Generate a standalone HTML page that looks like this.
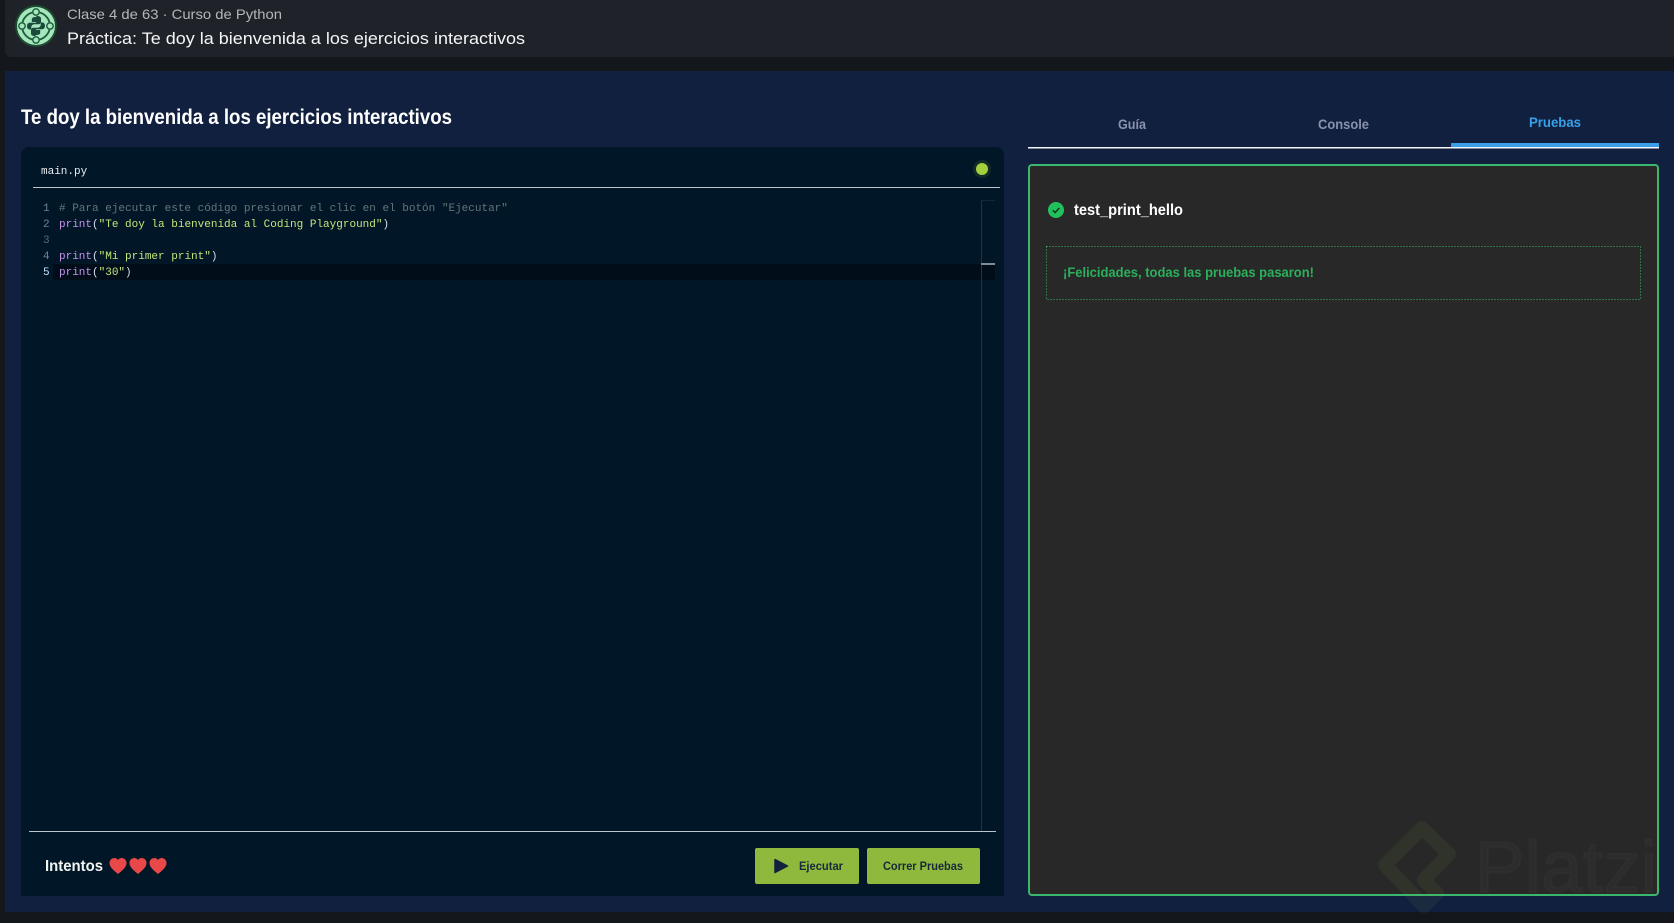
<!DOCTYPE html>
<html lang="es">
<head>
<meta charset="utf-8">
<title>Práctica: Te doy la bienvenida a los ejercicios interactivos</title>
<style>
html,body{margin:0;padding:0;width:1674px;height:923px;overflow:hidden;background:#14171c}
svg{display:block}
text{font-family:"Liberation Sans",sans-serif;white-space:pre}
.m{font-family:"Liberation Mono",monospace;font-size:11px}
</style>
</head>
<body>
<svg width="1674" height="923" viewBox="0 0 1674 923" xmlns="http://www.w3.org/2000/svg">
<rect width="1674" height="923" fill="#14171c"/>
<!-- top bar -->
<rect x="5" y="-10" width="1680" height="67" rx="6" fill="#1f2329"/>
<circle cx="36" cy="26" r="21" fill="#1d4a33"/>
<circle cx="36" cy="26" r="19" fill="#a5e6bb"/>
<circle cx="36" cy="26" r="14" fill="none" stroke="#1c5a3b" stroke-width="1.8"/>
<g fill="#a5e6bb" stroke="#1c5a3b" stroke-width="1.4">
<circle cx="36" cy="12" r="3.2"/><circle cx="36" cy="40" r="3.2"/><circle cx="22" cy="26" r="3.2"/><circle cx="50" cy="26" r="3.2"/>
</g>
<g fill="#1a4a3c">
<path id="py" d="M35.8 17c-4 0-4 1.700-4 2.500V22h4.300v.8h-6.200c-1.500 0-2.900 1-2.900 3.300s1.200 3.400 2.700 3.400h1.600v-2.300c0-1.600 1.400-3 3-3h4.300c1.300 0 2.400-1.100 2.400-2.500v-3.200c0-1.400-1.100-2.500-4.200-2.500z"/>
<path d="M35.8 17c-4 0-4 1.700-4 2.500V22h4.300v.8h-6.200c-1.500 0-2.900 1-2.900 3.300s1.200 3.400 2.700 3.400h1.600v-2.300c0-1.600 1.400-3 3-3h4.300c1.300 0 2.400-1.100 2.400-2.500v-3.200c0-1.400-1.100-2.500-4.200-2.500z" transform="rotate(180 36 26)"/>
</g>
<text x="67" y="19" font-size="14" fill="#b4b6ba" textLength="215" lengthAdjust="spacingAndGlyphs">Clase 4 de 63 · Curso de Python</text>
<text x="67" y="44" font-size="17" fill="#f4f5f6" textLength="458" lengthAdjust="spacingAndGlyphs">Práctica: Te doy la bienvenida a los ejercicios interactivos</text>
<!-- main panel -->
<rect x="5" y="71" width="1680" height="841" fill="#122040"/>
<text x="21" y="124" font-size="21" font-weight="700" fill="#fff" textLength="431" lengthAdjust="spacingAndGlyphs">Te doy la bienvenida a los ejercicios interactivos</text>
<!-- editor -->
<path d="M21 155a8 8 0 0 1 8-8h967a8 8 0 0 1 8 8v741H21z" fill="#011627"/>
<text class="m" x="41" y="174" fill="#e8edf2">main.py</text>
<circle cx="982" cy="169" r="9" fill="#1d3a2a" opacity=".6"/>
<circle cx="982" cy="169" r="6" fill="#a3cf3c"/>
<rect x="33" y="187" width="967" height="1" fill="#b9c4cc"/>
<rect x="53" y="264" width="942" height="16" fill="#010e1a"/>
<rect x="981" y="200" width="1" height="631" fill="#1f3445"/>
<rect x="981" y="200" width="14" height="1" fill="#14283a"/>
<rect x="981" y="263" width="14" height="2" fill="#7f8d9b"/>
<g class="m">
<text class="m" x="43" y="211" fill="#6f8496">1</text>
<text class="m" x="43" y="227" fill="#6f8496">2</text>
<text class="m" x="43" y="243" fill="#4f6a80">3</text>
<text class="m" x="43" y="259" fill="#6f8496">4</text>
<text class="m" x="43" y="275" fill="#c5e4fd">5</text>
<text class="m" x="59" y="211" fill="#637777"># Para ejecutar este código presionar el clic en el botón "Ejecutar"</text>
<text class="m" x="59" y="227"><tspan fill="#c792ea">print</tspan><tspan fill="#d6deeb">(</tspan><tspan fill="#c5e478">"Te doy la bienvenida al Coding Playground"</tspan><tspan fill="#d6deeb">)</tspan></text>
<text class="m" x="59" y="259"><tspan fill="#c792ea">print</tspan><tspan fill="#d6deeb">(</tspan><tspan fill="#c5e478">"Mi primer print"</tspan><tspan fill="#d6deeb">)</tspan></text>
<text class="m" x="59" y="275"><tspan fill="#c792ea">print</tspan><tspan fill="#d6deeb">(</tspan><tspan fill="#c5e478">"30"</tspan><tspan fill="#d6deeb">)</tspan></text>
</g>
<rect x="29" y="831" width="967" height="1" fill="#b9c4cc"/>
<text x="45" y="871" font-size="16" font-weight="700" fill="#f1f4f2" textLength="58" lengthAdjust="spacingAndGlyphs">Intentos</text>
<g fill="#e94848">
<path d="M118 874c-4-3.500-8.500-6.500-8.500-11 0-3 2.300-5 4.800-5 1.600 0 2.900.8 3.700 2 .8-1.200 2.100-2 3.700-2 2.500 0 4.800 2 4.800 5 0 4.500-4.500 7.500-8.500 11z"/>
<path d="M138 874c-4-3.500-8.500-6.500-8.500-11 0-3 2.300-5 4.800-5 1.600 0 2.900.8 3.700 2 .8-1.200 2.100-2 3.700-2 2.500 0 4.800 2 4.800 5 0 4.500-4.500 7.500-8.500 11z"/>
<path d="M158 874c-4-3.500-8.500-6.500-8.500-11 0-3 2.300-5 4.800-5 1.600 0 2.900.8 3.700 2 .8-1.200 2.100-2 3.700-2 2.500 0 4.800 2 4.800 5 0 4.500-4.500 7.500-8.500 11z"/>
</g>
<rect x="755" y="848" width="104" height="36" rx="2" fill="#8fb93d"/>
<path d="M775 859.500v13l12.500-6.500z" fill="#14213d" stroke="#14213d" stroke-width="1.500" stroke-linejoin="round"/>
<text x="799" y="870" font-size="12" font-weight="700" fill="#17293a" textLength="44" lengthAdjust="spacingAndGlyphs">Ejecutar</text>
<rect x="867" y="848" width="113" height="36" rx="2" fill="#8fb93d"/>
<text x="883" y="870" font-size="12" font-weight="700" fill="#17293a" textLength="80" lengthAdjust="spacingAndGlyphs">Correr Pruebas</text>
<!-- tabs -->
<text x="1118" y="129" font-size="14" font-weight="700" fill="#8892ab" textLength="28" lengthAdjust="spacingAndGlyphs">Guía</text>
<text x="1318" y="129" font-size="14" font-weight="700" fill="#8892ab" textLength="51" lengthAdjust="spacingAndGlyphs">Console</text>
<text x="1529" y="127" font-size="14" font-weight="700" fill="#38a0e8" textLength="52" lengthAdjust="spacingAndGlyphs">Pruebas</text>
<rect x="1028" y="147" width="631" height="1.500" fill="#f2f5f7"/>
<rect x="1451" y="143" width="208" height="4" fill="#3a9fe6"/>
<!-- results card -->
<rect x="1029" y="165" width="629" height="730" rx="3" fill="#282828" stroke="#3ab76c" stroke-width="2"/>
<circle cx="1056" cy="210" r="8" fill="#22c05c"/>
<path d="M1052.800 210.300l2.300 2.300 4.200-4.600" fill="none" stroke="#14321f" stroke-width="1.500"/>
<text x="1074" y="215" font-size="16" font-weight="700" fill="#fff" textLength="109" lengthAdjust="spacingAndGlyphs">test_print_hello</text>
<rect x="1046.500" y="246.500" width="594" height="53" fill="none" stroke="#3ab76c" stroke-width="1" stroke-dasharray="1 2"/>
<text x="1063" y="277" font-size="14" font-weight="700" fill="#2bb05c" textLength="251" lengthAdjust="spacingAndGlyphs">¡Felicidades, todas las pruebas pasaron!</text>
<!-- watermark -->
<path d="M1449 854l-25 26 13 13-13 13-39-41 37-37z" fill="none" stroke="#98ca3f" stroke-opacity=".07" stroke-width="14" stroke-linejoin="round"/>
<text x="1475" y="892" font-size="72" fill="#fff" fill-opacity=".018" stroke="#fff" stroke-opacity=".018" stroke-width="2" textLength="182" lengthAdjust="spacingAndGlyphs">Platzi</text>
</svg>
</body>
</html>
